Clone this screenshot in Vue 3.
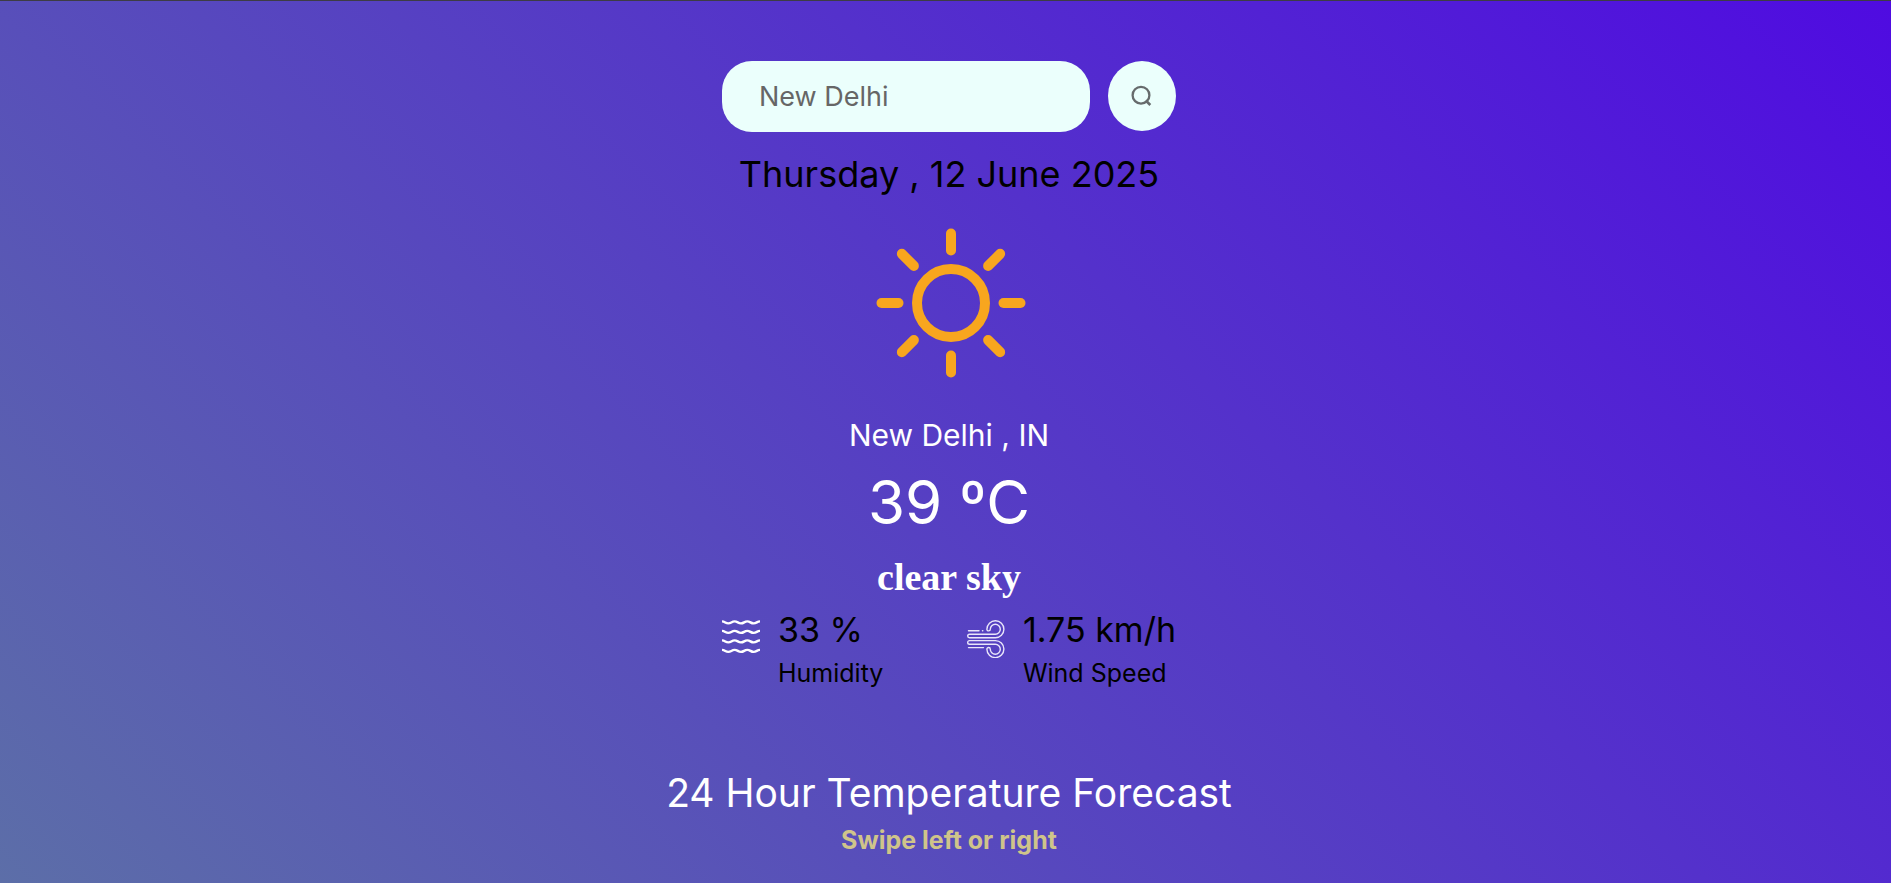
<script setup>
import { ref } from 'vue'

const city = ref('')
const rays = [0, 45, 90, 135, 180, 225, 270, 315]
const waves = [2, 11.5, 21, 30.5]
</script>

<template>
  <main class="page">
    <section class="weather">
      <form class="search" @submit.prevent>
        <input v-model="city" class="search-box" type="text" placeholder="New Delhi" aria-label="City" />
        <button class="search-button" type="submit" aria-label="Search">
          <svg class="search-icon" viewBox="0 0 22 22" fill="none" stroke="#666b6c" stroke-width="2.3">
            <circle cx="10" cy="10.2" r="8.4" />
            <path d="M14.8 15.5 19.3 20" stroke-width="2.6" />
          </svg>
        </button>
      </form>

      <p class="date">Thursday , 12 June 2025</p>

      <svg class="sun" viewBox="0 0 150 150" fill="none" stroke="#f8a61e" stroke-linecap="round" role="img" aria-label="Clear">
        <circle cx="75" cy="75" r="34" stroke-width="10" />
        <path v-for="angle in rays" :key="angle" d="M75 5.5V22.5" stroke-width="10" :transform="`rotate(${angle} 75 75)`" />
      </svg>

      <p class="city">New Delhi , IN</p>
      <p class="temperature">39 ºC</p>
      <h2 class="condition">clear sky</h2>

      <div class="stats">
        <div class="stat">
          <svg class="stat-icon" viewBox="0 0 38 38" fill="none" stroke="#fff" stroke-width="2.4">
            <path v-for="y in waves" :key="y" :transform="`translate(0 ${y})`" d="M0 -.6C3 -.6 3.500 1.400 6.300 1.400S9.600 -.6 12.600 -.6S16 1.400 19 1.400S22.300 -.6 25.300 -.6S28.600 1.400 31.600 1.400S35 -.6 38 -.6" />
          </svg>
          <div>
            <p class="stat-value">33 %</p>
            <p class="stat-label">Humidity</p>
          </div>
        </div>
        <div class="stat">
          <svg class="stat-icon" viewBox="0 0 38 38" fill="none" stroke="#e9e6fa" stroke-width="1.4" stroke-linecap="round">
            <path d="M28.400 17.800H2.500a1.800 1.800 0 0 1 0-3.600H28.300a5 5 0 1 0-5-5a1.700 1.700 0 0 1-3.400 0a8.500 8.500 0 1 1 8.500 8.600" />
            <path d="M28.400 20.600H2.500a1.800 1.800 0 0 0 0 3.600H28.300a5 5 0 1 1-5 5a1.700 1.700 0 0 0-3.400 0a8.500 8.500 0 1 0 8.500-8.600" />
            <path d="M1.500 10.800H12M15.500 10.800H15.800M1.500 27.600H16.500" />
          </svg>
          <div>
            <p class="stat-value">1.75 km/h</p>
            <p class="stat-label">Wind Speed</p>
          </div>
        </div>
      </div>
    </section>

    <section class="forecast">
      <h1 class="forecast-title">24 Hour Temperature Forecast</h1>
      <p class="forecast-hint">Swipe left or right</p>
    </section>
  </main>
</template>

<style>
body {
  margin: 0;
}
</style>

<style scoped>
.page {
  box-sizing: border-box;
  min-height: 100vh;
  padding: 60px 0 12px 7px;
  border-top: 1px solid #3d3c45;
  background: linear-gradient(45deg, #5c6ea8, #4f0be1);
  font-family: Inter, "Open Sans", sans-serif;
  color: #fff;
  display: flex;
  flex-direction: column;
  align-items: center;
}

p,
h1,
h2 {
  margin: 0;
  font-weight: 400;
}

.weather {
  width: 454px;
  max-width: 100%;
  display: flex;
  flex-direction: column;
  align-items: center;
}

.search {
  width: 100%;
  display: flex;
  gap: 18px;
}

.search-box {
  box-sizing: border-box;
  flex: 1;
  min-width: 0;
  height: 71px;
  padding: 0 37px;
  border: 0;
  border-radius: 30px;
  background: #ebfffc;
  color: #666;
  font: inherit;
  font-size: 27px;
}

.search-box::placeholder {
  color: #666;
  opacity: 1;
}

.search-button {
  width: 68px;
  height: 70px;
  padding: 0;
  border: 0;
  border-radius: 50%;
  background: #ebfffc;
  display: flex;
  align-items: center;
  justify-content: center;
}

.search-icon {
  width: 22px;
  height: 22px;
}

.date {
  margin-top: 15px;
  font-size: 36px;
  line-height: 54px;
  color: #000;
}

.sun {
  width: 150px;
  height: 150px;
  margin: 27px 0 0 4px;
}

.city {
  margin-top: 35px;
  font-size: 30px;
  line-height: 44px;
}

.temperature {
  font-size: 60px;
  line-height: 90px;
}

.condition {
  margin-top: 8px;
  font-family: "Liberation Serif", serif;
  font-size: 38px;
  line-height: 44px;
  font-weight: 700;
}

.stats {
  width: 100%;
  margin-top: 6px;
  display: flex;
  justify-content: space-between;
  color: #000;
}

.stat {
  display: flex;
  gap: 18px;
}

.stat-icon {
  width: 38px;
  height: 38px;
  margin-top: 15px;
}

.stat-value {
  font-size: 34px;
  line-height: 50px;
}

.stat-label {
  font-size: 25px;
  line-height: 36px;
}

.forecast {
  margin-top: 73px;
  text-align: center;
}

.forecast-title {
  font-size: 39px;
  line-height: 58px;
}

.forecast-hint {
  color: #cfc48a;
  font-size: 25px;
  line-height: 36px;
  font-weight: 700;
}
</style>
